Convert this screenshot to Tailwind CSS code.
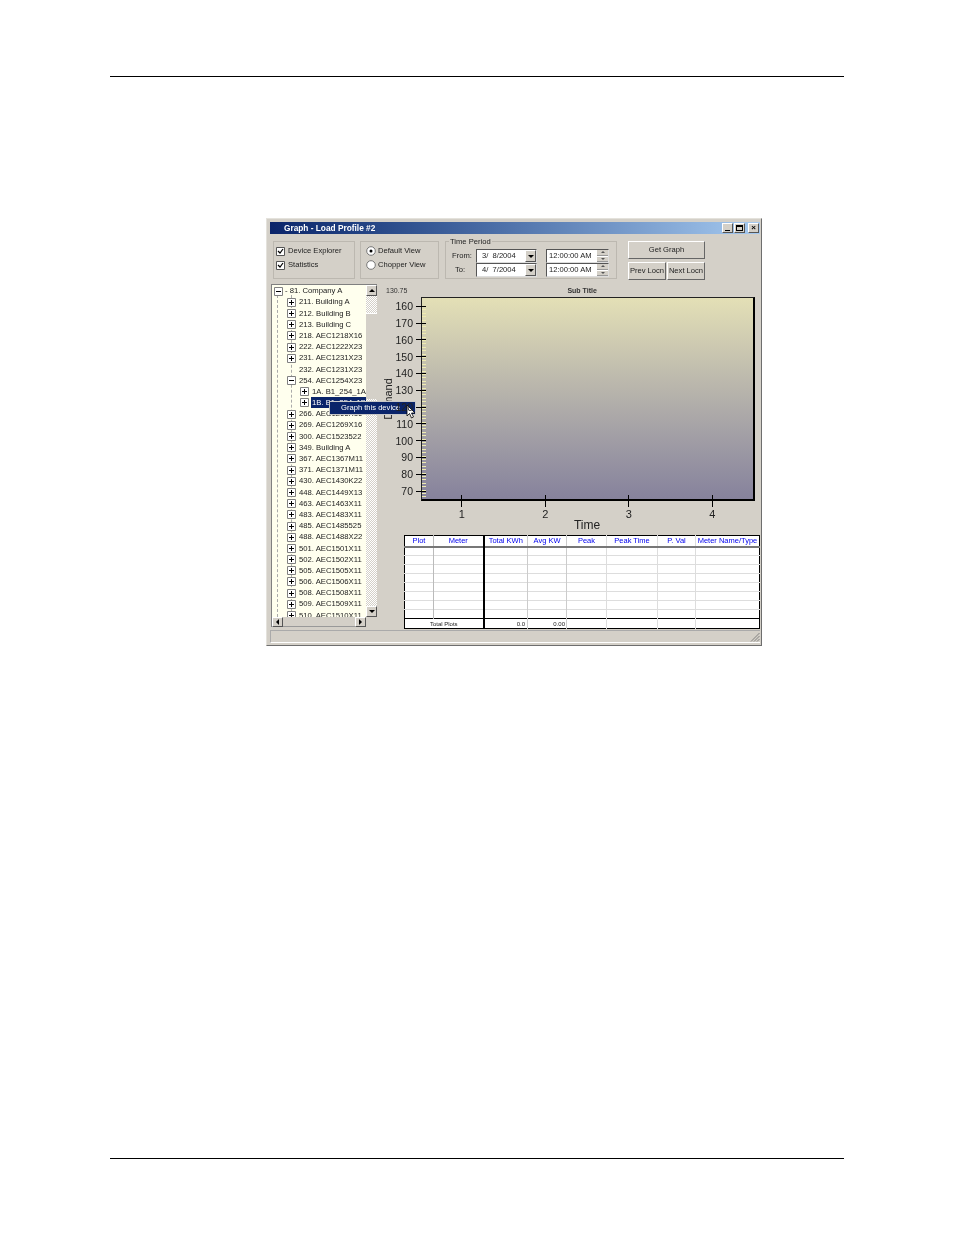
<!DOCTYPE html>
<html lang="en">
<head>
<meta charset="UTF-8">
<title>Graph - Load Profile #2</title>
<script src="https://cdn.jsdelivr.net/npm/@tailwindcss/browser@4"></script>
</head>
<body class="bg-white font-['Liberation_Sans',sans-serif]">
<div class="w-[954px] h-[1235px] overflow-hidden px-[110px] pt-[76px]">
  <div class="h-px bg-black"></div>

  <!-- window -->
  <div class="relative mt-[141px] ml-[156px] w-[496px] h-[428px] bg-[#d4d0c8] border border-[#6e6e6e] border-t-[#e4e2dc] border-l-[#e4e2dc] pl-[3px] pr-px pt-[3px] text-[7.6px] leading-none text-[#222] flex flex-col blur-[0.25px]">
    <div class="h-[12px] shrink-0 bg-linear-to-r from-[#0a246a] to-[#a6caf0] flex items-center justify-between pl-[14px] pr-px">
      <span class="text-white font-bold text-[8.3px]">Graph - Load Profile #2</span>
      <div class="flex gap-0 items-center">
        <span class="w-[11px] h-[10px] bg-[#d4d0c8] border border-[#555] border-t-white border-l-white flex items-end justify-center pb-px"><span class="w-[5px] h-px bg-black"></span></span>
        <span class="w-[11px] h-[10px] ml-px bg-[#d4d0c8] border border-[#555] border-t-white border-l-white flex items-center justify-center"><span class="w-[7px] h-[6px] border border-black border-t-2"></span></span>
        <span class="w-[11px] h-[10px] ml-[3px] bg-[#d4d0c8] border border-[#555] border-t-white border-l-white flex items-center justify-center text-[8px] font-bold text-black">×</span>
      </div>
    </div>

    <!-- controls -->
    <div class="flex mt-[7px] pl-[3px] h-[39px] shrink-0">
      <div class="w-[82px] h-[38px] border border-[#bcb8b0] pl-[2px] pt-[5px] flex flex-col gap-[6px]">
        <label class="flex items-center gap-[3px] h-[8px]"><svg class="w-[9px] h-[9px]" viewBox="0 0 9 9"><path d="M.5.5h8v8h-8z" fill="#fff" stroke="#555"/><path d="M2 4l2 2 3-4" fill="none" stroke="#000" stroke-width="1.2"/></svg>Device Explorer</label>
        <label class="flex items-center gap-[3px] h-[8px]"><svg class="w-[9px] h-[9px]" viewBox="0 0 9 9"><path d="M.5.5h8v8h-8z" fill="#fff" stroke="#555"/><path d="M2 4l2 2 3-4" fill="none" stroke="#000" stroke-width="1.2"/></svg>Statistics</label>
      </div>
      <div class="w-[79px] h-[38px] ml-[5px] border border-[#bcb8b0] pl-[5px] pt-[5px] flex flex-col gap-[6px]">
        <label class="flex items-center gap-[2px] h-[8px]"><svg class="w-[10px] h-[10px]" viewBox="0 0 10 10"><circle cx="5" cy="5" r="4.3" fill="#fff" stroke="#777"/><circle cx="5" cy="5" r="1.5" fill="#000"/></svg>Default View</label>
        <label class="flex items-center gap-[2px] h-[8px]"><svg class="w-[10px] h-[10px]" viewBox="0 0 10 10"><circle cx="5" cy="5" r="4.3" fill="#fff" stroke="#777"/></svg>Chopper View</label>
      </div>
      <div class="relative w-[172px] h-[38px] ml-[6px] border border-[#bcb8b0] pt-[7px] pl-[6px]">
        <span class="absolute -top-[4px] left-[3px] px-px bg-[#d4d0c8]">Time Period</span>
        <div class="flex items-center h-[14px]">
          <span class="w-[24px]">From:</span>
          <div class="w-[61px] h-[14px] bg-white border border-[#555] border-r-[#ddd] border-b-[#ddd] flex items-center justify-between pl-[5px] whitespace-pre">3/  8/2004<span class="w-[11px] h-[12px] bg-[#d4d0c8] border border-[#555] border-t-white border-l-white flex items-center justify-center"><span class="border-x-[3px] border-x-transparent border-t-[3px] border-t-black"></span></span></div>
          <div class="w-[63px] h-[14px] ml-[9px] bg-white border border-[#555] border-r-[#ddd] border-b-[#ddd] flex items-center justify-between pl-[2px]">12:00:00 AM<span class="w-[11px] h-[12px] flex flex-col gap-px"><span class="flex-1 bg-[#d4d0c8] border-b border-[#999] flex items-center justify-center"><span class="border-x-[2px] border-x-transparent border-b-[2px] border-b-[#555]"></span></span><span class="flex-1 bg-[#d4d0c8] border-b border-[#999] flex items-center justify-center"><span class="border-x-[2px] border-x-transparent border-t-[2px] border-t-[#555]"></span></span></span></div>
        </div>
        <div class="flex items-center h-[14px]">
          <span class="w-[24px] pl-[3px]">To:</span>
          <div class="w-[61px] h-[14px] bg-white border border-[#555] border-r-[#ddd] border-b-[#ddd] flex items-center justify-between pl-[5px] whitespace-pre">4/  7/2004<span class="w-[11px] h-[12px] bg-[#d4d0c8] border border-[#555] border-t-white border-l-white flex items-center justify-center"><span class="border-x-[3px] border-x-transparent border-t-[3px] border-t-black"></span></span></div>
          <div class="w-[63px] h-[14px] ml-[9px] bg-white border border-[#555] border-r-[#ddd] border-b-[#ddd] flex items-center justify-between pl-[2px]">12:00:00 AM<span class="w-[11px] h-[12px] flex flex-col gap-px"><span class="flex-1 bg-[#d4d0c8] border-b border-[#999] flex items-center justify-center"><span class="border-x-[2px] border-x-transparent border-b-[2px] border-b-[#555]"></span></span><span class="flex-1 bg-[#d4d0c8] border-b border-[#999] flex items-center justify-center"><span class="border-x-[2px] border-x-transparent border-t-[2px] border-t-[#555]"></span></span></span></div>
        </div>
      </div>
      <div class="w-[77px] ml-[11px] flex flex-col gap-[3px]">
        <button class="h-[18px] bg-[#d4d0c8] border border-[#666] border-t-white border-l-white">Get Graph</button>
        <div class="flex gap-px">
          <button class="w-[38px] h-[18px] bg-[#d4d0c8] border border-[#666] border-t-white border-l-white whitespace-nowrap">Prev Locn</button>
          <button class="w-[38px] h-[18px] bg-[#d4d0c8] border border-[#666] border-t-white border-l-white whitespace-nowrap">Next Locn</button>
        </div>
      </div>
    </div>

    <!-- main -->
    <div class="flex mt-[4px] pl-px h-[343px] shrink-0">
      <!-- tree -->
      <div class="w-[106px] h-[343px] shrink-0 flex flex-col border-l border-t border-[#808080]">
        <div class="flex h-[332px]">
          <div class="relative w-[94px] h-[332px] overflow-hidden bg-[#ffffee] pt-[0.5px] text-[7.7px] whitespace-nowrap">
            <span class="absolute left-[5px] top-[10px] bottom-0 border-l border-dashed border-[#aaa]"></span>
            <span class="absolute left-[19px] top-[10px] bottom-0 border-l border-dashed border-[#aaa]"></span>
            <div class="relative h-[11.2px] flex items-center pl-[2px] gap-[2px]"><svg class="w-[9px] h-[9px]" viewBox="0 0 9 9"><path d="M.5.5h8v8h-8z" fill="#fff" stroke="#808080"/><path d="M2 4.5h5" stroke="#000"/></svg>- 81. Company A</div>
            <div class="relative h-[11.2px] flex items-center pl-[15px] gap-[3px]"><svg class="w-[9px] h-[9px]" viewBox="0 0 9 9"><path d="M.5.5h8v8h-8z" fill="#fff" stroke="#808080"/><path d="M2 4.5h5M4.5 2v5" stroke="#000"/></svg>211. Building A</div>
            <div class="relative h-[11.2px] flex items-center pl-[15px] gap-[3px]"><svg class="w-[9px] h-[9px]" viewBox="0 0 9 9"><path d="M.5.5h8v8h-8z" fill="#fff" stroke="#808080"/><path d="M2 4.5h5M4.5 2v5" stroke="#000"/></svg>212. Building B</div>
            <div class="relative h-[11.2px] flex items-center pl-[15px] gap-[3px]"><svg class="w-[9px] h-[9px]" viewBox="0 0 9 9"><path d="M.5.5h8v8h-8z" fill="#fff" stroke="#808080"/><path d="M2 4.5h5M4.5 2v5" stroke="#000"/></svg>213. Building C</div>
            <div class="relative h-[11.2px] flex items-center pl-[15px] gap-[3px]"><svg class="w-[9px] h-[9px]" viewBox="0 0 9 9"><path d="M.5.5h8v8h-8z" fill="#fff" stroke="#808080"/><path d="M2 4.5h5M4.5 2v5" stroke="#000"/></svg>218. AEC1218X16</div>
            <div class="relative h-[11.2px] flex items-center pl-[15px] gap-[3px]"><svg class="w-[9px] h-[9px]" viewBox="0 0 9 9"><path d="M.5.5h8v8h-8z" fill="#fff" stroke="#808080"/><path d="M2 4.5h5M4.5 2v5" stroke="#000"/></svg>222. AEC1222X23</div>
            <div class="relative h-[11.2px] flex items-center pl-[15px] gap-[3px]"><svg class="w-[9px] h-[9px]" viewBox="0 0 9 9"><path d="M.5.5h8v8h-8z" fill="#fff" stroke="#808080"/><path d="M2 4.5h5M4.5 2v5" stroke="#000"/></svg>231. AEC1231X23</div>
            <div class="relative h-[11.2px] flex items-center pl-[27px]">232. AEC1231X23</div>
            <div class="relative h-[11.2px] flex items-center pl-[15px] gap-[3px]"><svg class="w-[9px] h-[9px]" viewBox="0 0 9 9"><path d="M.5.5h8v8h-8z" fill="#fff" stroke="#808080"/><path d="M2 4.5h5" stroke="#000"/></svg>254. AEC1254X23</div>
            <div class="relative h-[11.2px] flex items-center pl-[28px] gap-[3px]"><svg class="w-[9px] h-[9px]" viewBox="0 0 9 9"><path d="M.5.5h8v8h-8z" fill="#fff" stroke="#808080"/><path d="M2 4.5h5M4.5 2v5" stroke="#000"/></svg>1A. B1_254_1A</div>
            <div class="relative h-[11.2px] flex items-center pl-[28px] gap-[2px]"><svg class="w-[9px] h-[9px]" viewBox="0 0 9 9"><path d="M.5.5h8v8h-8z" fill="#fff" stroke="#808080"/><path d="M2 4.5h5M4.5 2v5" stroke="#000"/></svg><span class="bg-[#0a246a] text-white pl-px w-[55px] h-[11px] flex items-center">1B. B1_254_1B</span></div>
            <div class="relative h-[11.2px] flex items-center pl-[15px] gap-[3px]"><svg class="w-[9px] h-[9px]" viewBox="0 0 9 9"><path d="M.5.5h8v8h-8z" fill="#fff" stroke="#808080"/><path d="M2 4.5h5M4.5 2v5" stroke="#000"/></svg>266. AEC1266X16</div>
            <div class="relative h-[11.2px] flex items-center pl-[15px] gap-[3px]"><svg class="w-[9px] h-[9px]" viewBox="0 0 9 9"><path d="M.5.5h8v8h-8z" fill="#fff" stroke="#808080"/><path d="M2 4.5h5M4.5 2v5" stroke="#000"/></svg>269. AEC1269X16</div>
            <div class="relative h-[11.2px] flex items-center pl-[15px] gap-[3px]"><svg class="w-[9px] h-[9px]" viewBox="0 0 9 9"><path d="M.5.5h8v8h-8z" fill="#fff" stroke="#808080"/><path d="M2 4.5h5M4.5 2v5" stroke="#000"/></svg>300. AEC1523522</div>
            <div class="relative h-[11.2px] flex items-center pl-[15px] gap-[3px]"><svg class="w-[9px] h-[9px]" viewBox="0 0 9 9"><path d="M.5.5h8v8h-8z" fill="#fff" stroke="#808080"/><path d="M2 4.5h5M4.5 2v5" stroke="#000"/></svg>349. Building A</div>
            <div class="relative h-[11.2px] flex items-center pl-[15px] gap-[3px]"><svg class="w-[9px] h-[9px]" viewBox="0 0 9 9"><path d="M.5.5h8v8h-8z" fill="#fff" stroke="#808080"/><path d="M2 4.5h5M4.5 2v5" stroke="#000"/></svg>367. AEC1367M11</div>
            <div class="relative h-[11.2px] flex items-center pl-[15px] gap-[3px]"><svg class="w-[9px] h-[9px]" viewBox="0 0 9 9"><path d="M.5.5h8v8h-8z" fill="#fff" stroke="#808080"/><path d="M2 4.5h5M4.5 2v5" stroke="#000"/></svg>371. AEC1371M11</div>
            <div class="relative h-[11.2px] flex items-center pl-[15px] gap-[3px]"><svg class="w-[9px] h-[9px]" viewBox="0 0 9 9"><path d="M.5.5h8v8h-8z" fill="#fff" stroke="#808080"/><path d="M2 4.5h5M4.5 2v5" stroke="#000"/></svg>430. AEC1430K22</div>
            <div class="relative h-[11.2px] flex items-center pl-[15px] gap-[3px]"><svg class="w-[9px] h-[9px]" viewBox="0 0 9 9"><path d="M.5.5h8v8h-8z" fill="#fff" stroke="#808080"/><path d="M2 4.5h5M4.5 2v5" stroke="#000"/></svg>448. AEC1449X13</div>
            <div class="relative h-[11.2px] flex items-center pl-[15px] gap-[3px]"><svg class="w-[9px] h-[9px]" viewBox="0 0 9 9"><path d="M.5.5h8v8h-8z" fill="#fff" stroke="#808080"/><path d="M2 4.5h5M4.5 2v5" stroke="#000"/></svg>463. AEC1463X11</div>
            <div class="relative h-[11.2px] flex items-center pl-[15px] gap-[3px]"><svg class="w-[9px] h-[9px]" viewBox="0 0 9 9"><path d="M.5.5h8v8h-8z" fill="#fff" stroke="#808080"/><path d="M2 4.5h5M4.5 2v5" stroke="#000"/></svg>483. AEC1483X11</div>
            <div class="relative h-[11.2px] flex items-center pl-[15px] gap-[3px]"><svg class="w-[9px] h-[9px]" viewBox="0 0 9 9"><path d="M.5.5h8v8h-8z" fill="#fff" stroke="#808080"/><path d="M2 4.5h5M4.5 2v5" stroke="#000"/></svg>485. AEC1485525</div>
            <div class="relative h-[11.2px] flex items-center pl-[15px] gap-[3px]"><svg class="w-[9px] h-[9px]" viewBox="0 0 9 9"><path d="M.5.5h8v8h-8z" fill="#fff" stroke="#808080"/><path d="M2 4.5h5M4.5 2v5" stroke="#000"/></svg>488. AEC1488X22</div>
            <div class="relative h-[11.2px] flex items-center pl-[15px] gap-[3px]"><svg class="w-[9px] h-[9px]" viewBox="0 0 9 9"><path d="M.5.5h8v8h-8z" fill="#fff" stroke="#808080"/><path d="M2 4.5h5M4.5 2v5" stroke="#000"/></svg>501. AEC1501X11</div>
            <div class="relative h-[11.2px] flex items-center pl-[15px] gap-[3px]"><svg class="w-[9px] h-[9px]" viewBox="0 0 9 9"><path d="M.5.5h8v8h-8z" fill="#fff" stroke="#808080"/><path d="M2 4.5h5M4.5 2v5" stroke="#000"/></svg>502. AEC1502X11</div>
            <div class="relative h-[11.2px] flex items-center pl-[15px] gap-[3px]"><svg class="w-[9px] h-[9px]" viewBox="0 0 9 9"><path d="M.5.5h8v8h-8z" fill="#fff" stroke="#808080"/><path d="M2 4.5h5M4.5 2v5" stroke="#000"/></svg>505. AEC1505X11</div>
            <div class="relative h-[11.2px] flex items-center pl-[15px] gap-[3px]"><svg class="w-[9px] h-[9px]" viewBox="0 0 9 9"><path d="M.5.5h8v8h-8z" fill="#fff" stroke="#808080"/><path d="M2 4.5h5M4.5 2v5" stroke="#000"/></svg>506. AEC1506X11</div>
            <div class="relative h-[11.2px] flex items-center pl-[15px] gap-[3px]"><svg class="w-[9px] h-[9px]" viewBox="0 0 9 9"><path d="M.5.5h8v8h-8z" fill="#fff" stroke="#808080"/><path d="M2 4.5h5M4.5 2v5" stroke="#000"/></svg>508. AEC1508X11</div>
            <div class="relative h-[11.2px] flex items-center pl-[15px] gap-[3px]"><svg class="w-[9px] h-[9px]" viewBox="0 0 9 9"><path d="M.5.5h8v8h-8z" fill="#fff" stroke="#808080"/><path d="M2 4.5h5M4.5 2v5" stroke="#000"/></svg>509. AEC1509X11</div>
            <div class="relative h-[11.2px] flex items-center pl-[15px] gap-[3px]"><svg class="w-[9px] h-[9px]" viewBox="0 0 9 9"><path d="M.5.5h8v8h-8z" fill="#fff" stroke="#808080"/><path d="M2 4.5h5M4.5 2v5" stroke="#000"/></svg>510. AEC1510X11</div>
          </div>
          <!-- vertical scrollbar -->
          <div class="w-[11px] h-[332px] flex flex-col bg-[repeating-conic-gradient(#fff_0_25%,#d4d0c8_0_50%)] bg-[length:2px_2px]">
            <span class="h-[11px] bg-[#d4d0c8] border border-[#555] border-t-white border-l-white flex items-center justify-center"><span class="border-x-[3px] border-x-transparent border-b-[3px] border-b-black"></span></span>
            <span class="h-[86px] mt-[17px] bg-[#d4d0c8] border-t border-white"></span>
            <span class="h-[11px] mt-auto bg-[#d4d0c8] border border-[#555] border-t-white border-l-white flex items-center justify-center"><span class="border-x-[3px] border-x-transparent border-t-[3px] border-t-black"></span></span>
          </div>
        </div>
        <!-- horizontal scrollbar -->
        <div class="flex h-[10px] w-[94px]">
          <span class="w-[11px] bg-[#d4d0c8] border border-[#555] border-t-white border-l-white flex items-center justify-center"><span class="border-y-[3px] border-y-transparent border-r-[3px] border-r-black"></span></span>
          <span class="flex-1 bg-[#d4d0c8] border-b border-[#999]"></span>
          <span class="w-[11px] bg-[#d4d0c8] border border-[#555] border-t-white border-l-white flex items-center justify-center"><span class="border-y-[3px] border-y-transparent border-l-[3px] border-l-black"></span></span>
        </div>
      </div>

      <!-- chart + table -->
      <div class="flex-1 flex flex-col">
        <div class="flex h-[13px] shrink-0 items-center pl-[9px] text-[7px] text-[#333]">
          <span>130.75</span>
          <span class="ml-[160px] font-bold text-[7px]">Sub Title</span>
        </div>
        <div class="relative flex h-[204px] shrink-0">
          <span class="absolute left-[11px] top-[102px] -translate-x-1/2 -translate-y-1/2 -rotate-90 text-[11px] text-[#222] whitespace-nowrap">Demand</span>
          <div class="w-[49px] shrink-0 pt-[1px] flex flex-col relative z-10 text-[10.5px] text-[#222]">
            <div class="h-[16.8px] flex items-center justify-end gap-[3px]">160<span class="w-[10px] h-px bg-black"></span></div>
            <div class="h-[16.8px] flex items-center justify-end gap-[3px]">170<span class="w-[10px] h-px bg-black"></span></div>
            <div class="h-[16.8px] flex items-center justify-end gap-[3px]">160<span class="w-[10px] h-px bg-black"></span></div>
            <div class="h-[16.8px] flex items-center justify-end gap-[3px]">150<span class="w-[10px] h-px bg-black"></span></div>
            <div class="h-[16.8px] flex items-center justify-end gap-[3px]">140<span class="w-[10px] h-px bg-black"></span></div>
            <div class="h-[16.8px] flex items-center justify-end gap-[3px]">130<span class="w-[10px] h-px bg-black"></span></div>
            <div class="h-[16.8px] flex items-center justify-end gap-[3px]">120<span class="w-[10px] h-px bg-black"></span></div>
            <div class="h-[16.8px] flex items-center justify-end gap-[3px]">110<span class="w-[10px] h-px bg-black"></span></div>
            <div class="h-[16.8px] flex items-center justify-end gap-[3px]">100<span class="w-[10px] h-px bg-black"></span></div>
            <div class="h-[16.8px] flex items-center justify-end gap-[3px]">90<span class="w-[10px] h-px bg-black"></span></div>
            <div class="h-[16.8px] flex items-center justify-end gap-[3px]">80<span class="w-[10px] h-px bg-black"></span></div>
            <div class="h-[16.8px] flex items-center justify-end gap-[3px]">70<span class="w-[10px] h-px bg-black"></span></div>
          </div>
          <div class="relative w-[334px] h-[204px] -ml-[5px] bg-linear-to-b from-[#e4e0b6] to-[#86829c] border-t border-l border-[#222] border-r-2 border-b-2 border-r-black border-b-black">
            <span class="absolute left-0 top-[8px] bottom-0 w-[4px] bg-[repeating-linear-gradient(to_bottom,#eeebb0_0,#eeebb0_1px,transparent_1px,transparent_3.4px)]"></span>
          </div>
        </div>
        <div class="relative z-10 shrink-0 ml-[43px] -mt-[6px] grid grid-cols-[83.5px_83.5px_83.5px_83.5px] text-[#222]">
          <div class="flex flex-col items-center"><span class="w-px h-[12px] bg-black"></span><span class="mt-[2px] text-[11px]">1</span></div>
          <div class="flex flex-col items-center"><span class="w-px h-[12px] bg-black"></span><span class="mt-[2px] text-[11px]">2</span></div>
          <div class="flex flex-col items-center"><span class="w-px h-[12px] bg-black"></span><span class="mt-[2px] text-[11px]">3</span></div>
          <div class="flex flex-col items-center"><span class="w-px h-[12px] bg-black"></span><span class="mt-[2px] text-[11px]">4</span></div>
        </div>
        <div class="ml-[175px] -mt-px shrink-0 text-[12px] text-[#222] w-[70px] text-center h-[15px]">Time</div>

        <table class="ml-[27px] mt-[1px] shrink-0 w-[356px] table-fixed border-collapse border border-black bg-white text-[7.5px] text-[#0000ee]">
          <colgroup><col class="w-[29px]"><col class="w-[50px]"><col class="w-[44px]"><col class="w-[39px]"><col class="w-[40px]"><col class="w-[51px]"><col class="w-[38px]"><col></colgroup>
          <tr class="h-[11px] border-b-2 border-[#777] text-center">
            <td class="border-r border-[#bbb]">Plot</td><td class="border-r-2 border-black">Meter</td><td class="border-r border-[#ccc] whitespace-nowrap">Total KWh</td><td class="border-r border-[#ccc]">Avg KW</td><td class="border-r border-[#ddd]">Peak</td><td class="border-r border-[#ddd]">Peak Time</td><td class="border-r border-[#ddd]">P. Val</td><td class="whitespace-nowrap">Meter Name/Type</td>
          </tr>
          <tr class="h-[9px] border-b border-[#ddd]"><td class="border-r border-[#bbb]"></td><td class="border-r-2 border-black"></td><td class="border-r border-[#ccc]"></td><td class="border-r border-[#ccc]"></td><td class="border-r border-[#ddd]"></td><td class="border-r border-[#ddd]"></td><td class="border-r border-[#ddd]"></td><td></td></tr>
          <tr class="h-[9px] border-b border-[#ddd]"><td class="border-r border-[#bbb]"></td><td class="border-r-2 border-black"></td><td class="border-r border-[#ccc]"></td><td class="border-r border-[#ccc]"></td><td class="border-r border-[#ddd]"></td><td class="border-r border-[#ddd]"></td><td class="border-r border-[#ddd]"></td><td></td></tr>
          <tr class="h-[9px] border-b border-[#ddd]"><td class="border-r border-[#bbb]"></td><td class="border-r-2 border-black"></td><td class="border-r border-[#ccc]"></td><td class="border-r border-[#ccc]"></td><td class="border-r border-[#ddd]"></td><td class="border-r border-[#ddd]"></td><td class="border-r border-[#ddd]"></td><td></td></tr>
          <tr class="h-[9px] border-b border-[#ddd]"><td class="border-r border-[#bbb]"></td><td class="border-r-2 border-black"></td><td class="border-r border-[#ccc]"></td><td class="border-r border-[#ccc]"></td><td class="border-r border-[#ddd]"></td><td class="border-r border-[#ddd]"></td><td class="border-r border-[#ddd]"></td><td></td></tr>
          <tr class="h-[9px] border-b border-[#ddd]"><td class="border-r border-[#bbb]"></td><td class="border-r-2 border-black"></td><td class="border-r border-[#ccc]"></td><td class="border-r border-[#ccc]"></td><td class="border-r border-[#ddd]"></td><td class="border-r border-[#ddd]"></td><td class="border-r border-[#ddd]"></td><td></td></tr>
          <tr class="h-[9px] border-b border-[#ddd]"><td class="border-r border-[#bbb]"></td><td class="border-r-2 border-black"></td><td class="border-r border-[#ccc]"></td><td class="border-r border-[#ccc]"></td><td class="border-r border-[#ddd]"></td><td class="border-r border-[#ddd]"></td><td class="border-r border-[#ddd]"></td><td></td></tr>
          <tr class="h-[9px] border-b border-[#ddd]"><td class="border-r border-[#bbb]"></td><td class="border-r-2 border-black"></td><td class="border-r border-[#ccc]"></td><td class="border-r border-[#ccc]"></td><td class="border-r border-[#ddd]"></td><td class="border-r border-[#ddd]"></td><td class="border-r border-[#ddd]"></td><td></td></tr>
          <tr class="h-[9px] border-b border-black"><td class="border-r border-[#bbb]"></td><td class="border-r-2 border-black"></td><td class="border-r border-[#ccc]"></td><td class="border-r border-[#ccc]"></td><td class="border-r border-[#ddd]"></td><td class="border-r border-[#ddd]"></td><td class="border-r border-[#ddd]"></td><td></td></tr>
          <tr class="h-[10px] text-[6px] text-[#222]">
            <td colspan="2" class="border-r-2 border-black text-center">Total Plots</td><td class="border-r border-[#ccc] text-right pr-[2px]">0.0</td><td class="border-r border-[#ccc] text-right pr-[1px]">0.00</td><td class="border-r border-[#ddd]"></td><td class="border-r border-[#ddd]"></td><td class="border-r border-[#ddd]"></td><td></td>
          </tr>
        </table>
      </div>
    </div>

    <!-- status bar -->
    <div class="relative mt-[3px] h-[13px] border-t border-l border-[#aaa] border-b-white border-b">
      <svg class="absolute right-0 bottom-0 w-[10px] h-[10px]" viewBox="0 0 10 10"><path d="M9.5 1L1 9.5M9.5 4L4 9.5M9.5 7L7 9.5" stroke="#808080" fill="none"/></svg>
    </div>

    <!-- context menu -->
    <div class="absolute left-[62px] top-[182px] w-[87px] h-[14px] bg-[#0a246a] border border-[#c8c8c8] text-white text-[7.6px] flex items-center pl-[11px]">Graph this device</div>
    <svg class="absolute left-[139px] top-[185px] w-[10px] h-[15px]" viewBox="0 0 10 15"><path d="M1 1v11l2.5-2.5 2 4.5 2-1-2-4h3.5z" fill="#fff" stroke="#000" stroke-width=".8"/></svg>
  </div>

  <div class="h-px bg-black mt-[512px]"></div>
</div>
</body>
</html>
